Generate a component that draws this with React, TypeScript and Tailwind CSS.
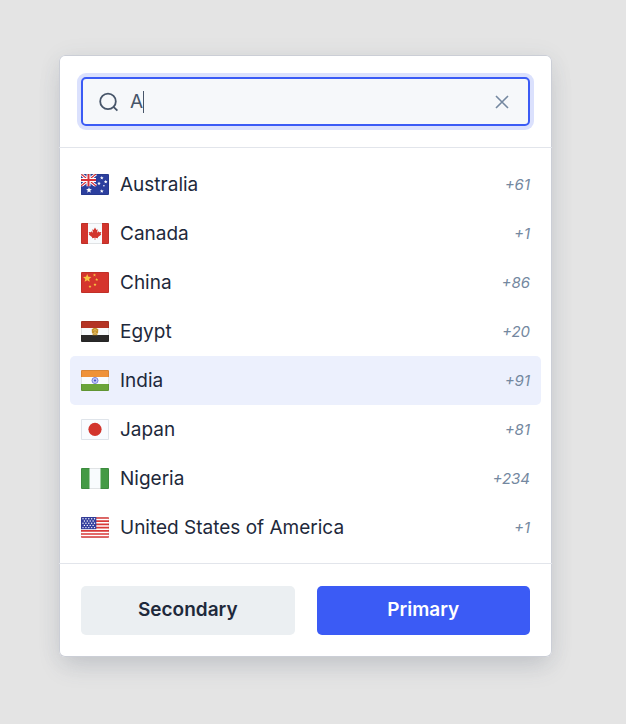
import { useState } from "react";
import type { ReactNode } from "react";

const star = (cx: number, cy: number, r: number) =>
  Array.from({ length: 10 }, (_, i) => {
    const a = (Math.PI / 5) * i - Math.PI / 2;
    const d = i % 2 === 0 ? r : r * 0.45;
    return `${(cx + d * Math.cos(a)).toFixed(2)},${(cy + d * Math.sin(a)).toFixed(2)}`;
  }).join(" ");

function Flag({ children, edge = "#00000018" }: { children: ReactNode; edge?: string }) {
  return (
    <svg viewBox="0 0 28 21" className="h-[21px] w-7 shrink-0 rounded-[1px]" aria-hidden="true">
      {children}
      <rect x="0.5" y="0.5" width="27" height="20" fill="none" stroke={edge} />
    </svg>
  );
}

const Australia = () => (
  <Flag>
    <rect width="28" height="21" fill="#2c3f9e" />
    <path d="M0 0 15 12M15 0 0 12" stroke="#fff" strokeWidth="3" />
    <path d="M0 0 15 12M15 0 0 12" stroke="#d8323a" strokeWidth="1.2" />
    <path d="M7.5 0V12.5M0 6H15" stroke="#fff" strokeWidth="4" />
    <path d="M7.5 0V12.5M0 6H15" stroke="#d8323a" strokeWidth="2" />
    <rect y="12.5" width="15" height="8.5" fill="#2c3f9e" />
    <g fill="#fff">
      <polygon points={star(8, 16.2, 3)} />
      <polygon points={star(20.8, 4, 1.9)} />
      <polygon points={star(18, 9.5, 1.9)} />
      <polygon points={star(24.7, 7.8, 1.9)} />
      <polygon points={star(20.8, 17.2, 2)} />
      <circle cx="22.9" cy="11.7" r="0.8" />
    </g>
  </Flag>
);

const Canada = () => (
  <Flag>
    <rect width="28" height="21" fill="#f8fbfd" />
    <path d="M0 0H7V21H0ZM21 0H28V21H21Z" fill="#d2352d" />
    <path
      d="M14 4.5 15.4 7 16.7 6.3 16.1 9.7 17.8 8.2 18.3 9.2 20.3 8.9 19.6 11 20.3 11.5 16.8 14.2 17.1 15.2 14.3 14.8V17H13.7V14.8L10.9 15.2 11.2 14.2 7.7 11.5 8.4 11 7.7 8.9 9.7 9.2 10.2 8.2 11.9 9.7 11.3 6.3 12.6 7Z"
      fill="#d2352d"
    />
  </Flag>
);

const China = () => (
  <Flag>
    <rect width="28" height="21" fill="#d5352d" />
    <g fill="#f8c440">
      <polygon points={star(6.2, 6.3, 4.4)} />
      <polygon points={star(13.5, 3.1, 1.6)} />
      <polygon points={star(15.7, 7.6, 1.6)} />
      <polygon points={star(14, 12.7, 1.6)} />
      <polygon points={star(9, 14.5, 1.6)} />
    </g>
  </Flag>
);

const Egypt = () => (
  <Flag>
    <rect width="28" height="21" fill="#f8fbfd" />
    <rect width="28" height="7" fill="#b43425" />
    <rect y="14" width="28" height="7" fill="#292929" />
    <path d="M12.8 7H15.2L17.3 8.3 17 12.8 15.4 12 16.8 14.3H11.2L12.6 12 11 12.8 10.7 8.3Z" fill="#c4932c" />
    <path d="M12.5 9.5 14 8.5 15.5 9.5M13 11.2H15M12.5 13H15.5" stroke="#f3d68b" strokeWidth="0.7" fill="none" />
  </Flag>
);

const India = () => (
  <Flag>
    <rect width="28" height="21" fill="#f8fbfd" />
    <rect width="28" height="7" fill="#ef9238" />
    <rect y="14" width="28" height="7" fill="#6ba539" />
    <circle cx="14" cy="10.5" r="3" fill="#dde0fa" stroke="#6670d8" strokeWidth="0.9" />
    <path d="M14 8V13M11.5 10.5H16.5M12.2 8.7 15.8 12.3M15.8 8.7 12.2 12.3" stroke="#818ae0" strokeWidth="0.4" />
    <circle cx="14" cy="10.5" r="1" fill="#4650c4" />
  </Flag>
);

const Japan = () => (
  <Flag edge="#dfe4ea">
    <rect width="28" height="21" fill="#f9fcff" />
    <circle cx="14" cy="10.3" r="6.6" fill="#d2352d" />
  </Flag>
);

const Nigeria = () => (
  <Flag>
    <rect width="28" height="21" fill="#f8fbfd" />
    <path d="M0 0H8.5V21H0ZM19.5 0H28V21H19.5Z" fill="#449a45" />
  </Flag>
);

const UnitedStates = () => (
  <Flag edge="#0000000c">
    <rect width="28" height="21" fill="#fff" />
    <path
      d="M0 1H28M0 4.2H28M0 7.4H28M0 10.6H28M0 13.8H28M0 17H28M0 20H28"
      stroke="#d93a38"
      strokeWidth="1.7"
    />
    <rect width="15.3" height="12.2" fill="#343f9f" />
    <g fill="#fff">
      {[1.8, 4, 6.2, 8.4, 10.6].map((y, row) =>
        [2, 4.9, 7.8, 10.7, 13.5].map((x) =>
          row % 2 === 0 ? (
            <circle key={`${x}-${y}`} cx={x} cy={y} r="0.7" />
          ) : x < 13 ? (
            <circle key={`${x}-${y}`} cx={x + 1.4} cy={y} r="0.7" />
          ) : null,
        ),
      )}
    </g>
  </Flag>
);

const countries = [
  { name: "Australia", code: "+61", Icon: Australia },
  { name: "Canada", code: "+1", Icon: Canada },
  { name: "China", code: "+86", Icon: China },
  { name: "Egypt", code: "+20", Icon: Egypt },
  { name: "India", code: "+91", Icon: India },
  { name: "Japan", code: "+81", Icon: Japan },
  { name: "Nigeria", code: "+234", Icon: Nigeria },
  { name: "United States of America", code: "+1", Icon: UnitedStates },
];

export default function App() {
  const [query, setQuery] = useState("A");
  const [selected, setSelected] = useState("India");

  return (
    <main className="min-h-screen bg-[#e4e4e4] pt-[55px] pr-[74px] pb-16 pl-[59px] font-['Inter',sans-serif] text-[#1e293b]">
      <section className="rounded-md bg-white shadow-[inset_0_0_0_1px_#cbced6,0_12px_24px_-4px_rgba(71,85,105,0.18),0_2px_24px_rgba(71,85,105,0.07)]">
        <header className="border-b border-[#e2e5eb] px-[22px] pt-[22px] pb-[21px]">
          <div className="flex h-[49px] items-center rounded-[5px] border-2 border-[#3b5bf5] bg-[#f6f8fa] pr-3.5 pl-4 shadow-[0_0_0_4px_#dbe1fd]">
            <svg viewBox="0 0 20 20" className="size-5 shrink-0" fill="none" stroke="#475569" strokeWidth="1.8" aria-hidden="true">
              <circle cx="9" cy="9.4" r="7.8" />
              <path d="M14.5 14.8 18.4 18.6" />
            </svg>
            <div className="relative ml-[11px] flex min-w-0 flex-1">
              <input
                type="text"
                aria-label="Search countries"
                value={query}
                onChange={(e) => setQuery(e.target.value)}
                className="w-full bg-transparent text-[19px] leading-7 text-[#475569] caret-transparent outline-none"
              />
              <span className="pointer-events-none absolute inset-y-0 left-0 flex items-center text-[19px]" aria-hidden="true">
                <span className="invisible">{query}</span>
                <span className="h-[22px] w-px bg-[#475569]" />
              </span>
            </div>
            <button type="button" aria-label="Clear search" onClick={() => setQuery("")} className="flex size-6 items-center justify-center">
              <svg viewBox="0 0 14 14" className="size-3.5" fill="none" stroke="#7488a0" strokeWidth="1.6" aria-hidden="true">
                <path d="M1 1 13 13M13 1 1 13" />
              </svg>
            </button>
          </div>
        </header>

        <ul className="px-[11px] pt-3 pb-[11px]">
          {countries.map(({ name, code, Icon }) => (
            <li key={name}>
              <button
                type="button"
                aria-pressed={selected === name}
                onClick={() => setSelected(name)}
                className={`flex h-[49px] w-full items-center rounded-[5px] px-[11px] text-left ${
                  selected === name ? "bg-[#ecf0fd]" : "bg-transparent"
                }`}
              >
                <Icon />
                <span className="ml-[11px] flex-1 text-[19px] leading-7">{name}</span>
                <span className="text-[15px] leading-6 text-[#7488a0] italic">{code}</span>
              </button>
            </li>
          ))}
        </ul>

        <footer className="flex gap-[22px] border-t border-[#e2e5eb] p-[22px]">
          <button type="button" className="h-[49px] flex-1 rounded-[5px] bg-[#ebeff2] text-[19px] font-semibold">
            Secondary
          </button>
          <button type="button" className="h-[49px] flex-1 rounded-[5px] bg-[#3b5bf5] text-[19px] font-semibold text-white">
            Primary
          </button>
        </footer>
      </section>
    </main>
  );
}
